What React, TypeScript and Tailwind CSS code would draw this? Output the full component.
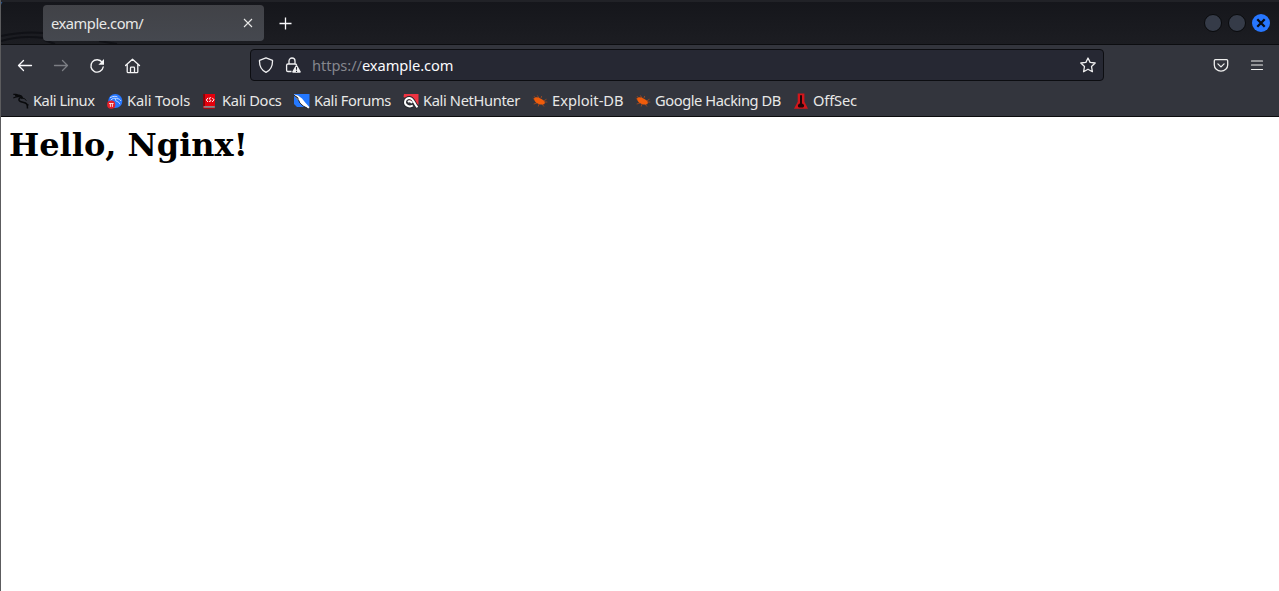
import type { ReactNode } from 'react';

function Dragon() {
  return (
    <svg width="16" height="16" viewBox="0 0 16 16" fill="none" stroke="#090a0c">
      <path d="M.3 1.4 3 1.4 7 2.6M.3 5 3.5 3.8 6.5 3.4M2 2.6 7 3.2" strokeWidth="1.2" />
      <path d="M6 2.4c2 .2 3 1.2 3.2 2.2L7.5 4.5C5.6 5.2 5.5 7.3 6.8 8.2 8.8 9.6 12.2 9 13.7 11c.7 1 .8 2.3.8 4.6" strokeWidth="1.5" />
      <path d="M8 5.1c2.3-.2 4.5.6 5.3 2.6M13.8 11.5l2 .5" strokeWidth="1" />
    </svg>
  );
}

function Tools() {
  return (
    <svg width="16" height="16" viewBox="0 0 16 16" fill="none">
      <circle cx="8.3" cy="8" r="7.1" fill="#2777ff" />
      <path d="M3 4.8c3-1.8 5.5-1.8 7.5-.8M3.5 7.5C5.5 5.1 7.6 4.7 9.5 5.7M8.5 6C7.8 9 12 7.8 12.8 11.2M9.5 5.6c2.4 0 3.6.8 4.5 2.4" stroke="#c6dcff" strokeWidth="1" />
      <circle cx="4.2" cy="11.7" r="4.1" fill="#e3202b" />
      <path d="M2 10.5h4.6M3.4 10.5v3.4M5.4 10.5v3.4" stroke="#ffe7e7" strokeWidth=".9" />
    </svg>
  );
}

function Docs() {
  return (
    <svg width="16" height="16" viewBox="0 0 16 16" fill="none">
      <path d="M1 1h2v14H1z" fill="#86040a" />
      <path d="M3 1h10v12H3z" fill="#e3000c" />
      <path d="M1.5 14h11.3" stroke="#e7d5d7" />
      <path d="M1.5 15.3h11.3" stroke="#b90008" />
      <path d="M6 4.8 4.3 7 6 9M9 4.8c-2-.4-2.2 1-.9 1.8s.8 2.3-1 1.8M10.2 4.8 12 6.8 10.2 9" stroke="white" strokeWidth="1" />
    </svg>
  );
}

function Forums() {
  return (
    <svg width="16" height="16" viewBox="0 0 16 16">
      <path d="M0 1h15.5v13H3L0 11z" fill="#2478ff" />
      <path d="m0 1.5 4 1 4 3 3.2 4 4.3 4.8-1.2 1.2-4.6-2.2-3.2-2.4-1.3-3L2 5z" fill="white" />
      <path d="m0 2 4.5 5 1.4 3 3.3 3 4.3 2.3M1.5 3l3 2.4" fill="none" stroke="#17191c" strokeWidth=".9" />
    </svg>
  );
}

function NetHunter() {
  return (
    <svg width="16" height="16" viewBox="0 0 16 16" fill="none">
      <path d="M1 1h14.5v11L8 8 .5 4z" fill="#ef3342" />
      <path d="M9.8 12.6C6.5 15 2 12.5 2 9.2 2 6.2 4.7 4.5 7.3 5c3.5.7 3.7 5.8 7.2 9.5" stroke="#25272d" strokeWidth="3.8" />
      <path d="M9.8 12.5C6.5 14.7 2 12.5 2 9.3 2 6.3 4.7 4.7 7.3 5.2c3.5.7 3.7 5.6 7.2 9M5 9c1.2-1.2 3-.8 4 1" stroke="white" strokeWidth="2" />
    </svg>
  );
}

function Bug() {
  return (
    <svg width="16" height="16" viewBox="0 0 16 16" fill="none" stroke="#a84a1e" strokeWidth=".8">
      <path d="m2.8 7-2-1.8M4 5.5 2 3.2M7 5 5.3 2.4M9 5.2 9.7 3M11.5 8l3-1.8M12 9l3.3.1M10 11l2 2.5M7 11l-.8 2.5M5 10l-3.3 1" />
      <path d="M2 5.2c1.8-1.5 4.2-.9 6.4.2 2.2 1 3.3 1.7 4.4 3.5l-.3 2c-2.6 1.2-5.3.7-7.3-.6C3.3 9.2 2.2 7.6 2 5.2Z" fill="#ef5c0b" stroke="none" />
    </svg>
  );
}

function OffSec() {
  return (
    <svg width="16" height="16" viewBox="0 0 16 16">
      <path d="M4.7.5h6.7v8.2l3.6 7.1H1l3.7-7.1z" fill="#d2161b" />
      <path d="M7 2.2h2v8.2c3 .8 2.6 4 .2 4.2H6.8c-2.5-.3-2.6-3.5.2-4.2z" fill="#210508" />
    </svg>
  );
}

const bookmarks: { label: string; icon: ReactNode; width: string; tracking: string }[] = [
  { label: 'Kali Linux', icon: <Dragon />, width: 'w-[94px]', tracking: 'tracking-[-0.45px]' },
  { label: 'Kali Tools', icon: <Tools />, width: 'w-[95px]', tracking: 'tracking-[-0.13px]' },
  { label: 'Kali Docs', icon: <Docs />, width: 'w-[92px]', tracking: 'tracking-[-0.3px]' },
  { label: 'Kali Forums', icon: <Forums />, width: 'w-[109px]', tracking: 'tracking-[-0.36px]' },
  { label: 'Kali NetHunter', icon: <NetHunter />, width: 'w-[129px]', tracking: 'tracking-[-0.36px]' },
  { label: 'Exploit-DB', icon: <Bug />, width: 'w-[103px]', tracking: 'tracking-normal' },
  { label: 'Google Hacking DB', icon: <Bug />, width: 'w-[158px]', tracking: 'tracking-[-0.42px]' },
  { label: 'OffSec', icon: <OffSec />, width: 'w-[80px]', tracking: 'tracking-[-0.15px]' },
];

function TabStrip() {
  return (
    <div className="relative flex h-[45px] shrink-0 items-start border-b border-[#0c0d10] bg-linear-to-b from-[#15161b] to-[#1c1d22] pt-[5px] pl-[42px]">
      <svg className="absolute top-0 left-0" width="130" height="44" fill="none" stroke="#101116">
        <path d="M0 36Q22 31 43 33M0 41Q20 35 43 38M43 40 54 44M98 41l18 3" strokeWidth="2" />
        <path d="M0 0h5Q1 1 0 5Z" fill="#285188" stroke="none" />
      </svg>
      <div className="absolute inset-x-0 top-0 h-[2px] bg-[#212227]" />
      <div className="relative flex h-9 w-[221px] items-center justify-between rounded bg-linear-to-b from-[#414247] to-[#45484f] pr-[11px] pl-2">
        <span className="text-[14.67px] leading-5 tracking-[-0.45px]">example.com/</span>
        <svg width="10" height="10" viewBox="0 0 10 10" fill="none" stroke="#e8e8e7" strokeWidth="1.1"><path d="m1 1 8 8m0-8L1 9" /></svg>
      </div>
      <svg className="mt-[12px] ml-[15px]" width="13" height="13" fill="none" stroke="#fbfbfe" strokeWidth="1.3"><path d="M6.5.5v12M.5 6.5h12" /></svg>
      <div className="mt-[9px] mr-[9px] ml-auto flex gap-[6px]">
        <span className="size-[18px] rounded-full border border-[#090a0c] bg-[#353b48]" />
        <span className="size-[18px] rounded-full border border-[#090a0c] bg-[#353b48]" />
        <svg width="18" height="18" viewBox="0 0 18 18"><circle cx="9" cy="9" r="9" fill="#2777ff" /><path d="m5.3 5.3 7.4 7.4m0-7.4-7.4 7.4" stroke="#090c12" strokeWidth="2.3" /></svg>
      </div>
    </div>
  );
}

function Toolbar() {
  return (
    <div className="flex h-[41px] shrink-0 items-center">
      <div className="ml-[16px] flex items-center gap-[20px]">
        <svg width="16" height="16" viewBox="0 0 16 16" fill="none" stroke="#fbfbfe" strokeWidth="1.3" strokeLinecap="round" strokeLinejoin="round"><path d="M14.5 7.5H1.5M6.5 2.5l-5 5 5 5" /></svg>
        <svg width="16" height="16" viewBox="0 0 16 16" fill="none" stroke="#7c7e84" strokeWidth="1.3" strokeLinecap="round" strokeLinejoin="round"><path d="M1.5 7.5h13M9.5 2.5l5 5-5 5" /></svg>
        <svg width="16" height="16" viewBox="0 0 16 16" fill="none" stroke="#f5f5f6" strokeWidth="1.4"><path d="M13.2 4.4A6.2 6.2 0 1 0 14.2 9" strokeLinecap="round" /><path d="M15 1v5.7H9.4z" fill="#f5f5f6" stroke="none" /></svg>
        <svg width="16" height="16" viewBox="0 0 16 16" fill="none" stroke="#f5f5f6" strokeWidth="1.3" strokeLinecap="round" strokeLinejoin="round"><path d="m.5 7.5 7-6.3 7 6.3M2.2 6.5v7.2c0 .6.4 1 1 1h8.6c.6 0 1-.4 1-1V6.5M5.5 14.2V10c0-.5.3-.8.8-.8h2.4c.5 0 .8.3.8.8v4.2" /></svg>
      </div>
      <div className="mb-[2px] ml-[109px] flex h-[32px] w-[854px] items-center rounded border border-[#0c0d11] bg-[#262833] px-[7px]">
        <svg width="16" height="16" viewBox="0 0 16 16" fill="none" stroke="#f0f0f2" strokeWidth="1.3" strokeLinejoin="round"><path d="M8 .8 14.5 3.3c.2 4.8-1.2 9.4-6.5 12-5.3-2.6-6.7-7.2-6.5-12Z" /></svg>
        <svg className="ml-[11px]" width="16" height="16" viewBox="0 0 16 16" fill="none"><path d="M4 7V4a3 3 0 0 1 6 0v3M6.5 14.5H3c-.8 0-1.4-.5-1.4-1.3V8.3C1.6 7.5 2.2 7 3 7h7.3c.7 0 1.2.5 1.3 1" stroke="#f0f0f2" strokeWidth="1.3" /><path d="M11.5 8c.4 0 .6.2.8.5l3.4 6c.3.6 0 1.2-.7 1.2H8c-.7 0-1-.6-.7-1.2l3.4-6c.2-.3.4-.5.8-.5Z" fill="#f0f0f2" /><path d="M11.5 10v2.8m0 .9V15" stroke="#262833" strokeWidth="1.1" /></svg>
        <div className="ml-[11px] text-[14.67px] leading-5 tracking-[-0.07px] whitespace-nowrap text-[#fbfbfe]"><span className="text-[#85868d]">https://</span>example.com</div>
        <svg className="ml-auto" width="16" height="16" viewBox="0 0 16 16" fill="none" stroke="#eeeeef" strokeWidth="1.3" strokeLinejoin="round"><path d="m8 1 2.1 4.4 5.1.6-3.7 3.5.9 5.2L8 12.2l-4.4 2.5.9-5.2L.8 6l5.1-.6Z" /></svg>
      </div>
      <svg className="ml-[109px]" width="16" height="16" viewBox="0 0 16 16" fill="none" stroke="#efefee" strokeWidth="1.3" strokeLinecap="round" strokeLinejoin="round"><path d="M2.4 1.7h11.2c.7 0 1.1.5 1.1 1.1V7a6.7 6.1 0 0 1-13.4 0V2.8c0-.6.4-1.1 1.1-1.1Z" /><path d="M4.9 5.9 8 8.9l3.1-3" /></svg>
      <svg className="ml-[20px]" width="16" height="16" viewBox="0 0 16 16" fill="none" stroke="#efefee" strokeWidth="1.2" strokeLinecap="round"><path d="M2.5 3h11M2.5 7h11M2.5 11.5h11" /></svg>
    </div>
  );
}

export default function App() {
  return (
    <div className="flex h-[591px] w-[1279px] flex-col overflow-hidden border-l border-[#5c5c5e] bg-[#33353d] font-['Noto_Sans',sans-serif] text-[#e8e8e7]">
      <TabStrip />
      <Toolbar />
      <nav className="flex h-[31px] shrink-0 items-center border-b border-[#0c0c0e] pl-[12px]">
        {bookmarks.map(({ label, icon, width, tracking }) => (
          <div key={label} className={`${width} flex shrink-0 items-center gap-1`}>
            <span className="shrink-0">{icon}</span>
            <span className={`${tracking} pb-[2px] text-[14.67px] leading-5 whitespace-nowrap`}>{label}</span>
          </div>
        ))}
      </nav>
      <main className="flex-1 bg-white px-2 pt-[9px] text-black">
        <h1 className="font-['DejaVu_Serif',serif] text-[32px] leading-[38px] font-bold">Hello, Nginx!</h1>
      </main>
    </div>
  );
}
